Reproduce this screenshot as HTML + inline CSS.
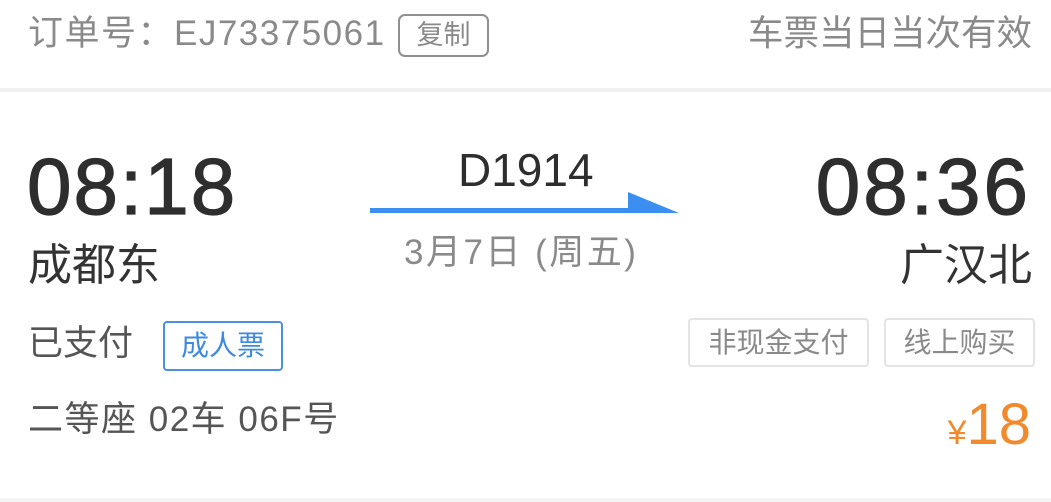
<!DOCTYPE html>
<html><head><meta charset="utf-8"><style>
html,body{margin:0;padding:0;width:1051px;height:502px;overflow:hidden;background:#fff;}
body{position:relative;font-family:"Liberation Sans","Noto Sans CJK SC",sans-serif;}
.a{position:absolute;line-height:1;white-space:nowrap;}
.box{position:absolute;box-sizing:border-box;display:flex;align-items:center;justify-content:center;line-height:1;}
</style></head><body>
<div class="a" style="left:28px;top:16px;font-size:35px;color:#8a8a8a;letter-spacing:1.5px;">订单号：EJ73375061</div>
<div class="box" style="left:398px;top:14px;width:91px;height:43px;border:2.5px solid #8f8f8f;border-radius:7px;font-size:27px;color:#8a8a8a;">复制</div>
<div class="a" style="left:748px;top:16px;font-size:35.5px;color:#8a8a8a;">车票当日当次有效</div>
<div style="position:absolute;left:0;top:88px;width:1051px;height:4px;background:#f1f1f1;"></div>

<div class="a" style="left:27px;top:147px;font-size:80px;color:#2e2e2e;letter-spacing:2px;-webkit-text-stroke:1.2px #2e2e2e;">08:18</div>
<div class="a" style="right:20px;top:147px;font-size:80px;color:#2e2e2e;letter-spacing:3px;-webkit-text-stroke:1.2px #2e2e2e;">08:36</div>
<div class="a" style="left:458px;top:147px;font-size:46px;color:#2e2e2e;">D1914</div>
<svg style="position:absolute;left:0;top:0" width="1051" height="502"><rect x="370" y="208" width="262" height="5" fill="#3b8ff0"/><polygon points="628,192 679,213 628,213" fill="#3b8ff0"/></svg>
<div class="a" style="left:404px;top:235px;font-size:35px;color:#8a8a8a;letter-spacing:2.5px;">3月7日 (周五)</div>
<div class="a" style="left:28px;top:244px;font-size:44px;color:#333;">成都东</div>
<div class="a" style="right:19px;top:244px;font-size:44px;color:#333;">广汉北</div>

<div class="a" style="left:28px;top:326px;font-size:35px;color:#555;">已支付</div>
<div class="box" style="left:163px;top:321px;width:120px;height:50px;border:2px solid #4a90e2;border-radius:4px;font-size:28px;color:#3d8ae0;">成人票</div>
<div class="box" style="left:688px;top:318px;width:181px;height:49px;border:2px solid #e4e4e4;border-radius:4px;font-size:28px;color:#8a8a8a;">非现金支付</div>
<div class="box" style="left:884px;top:318px;width:151px;height:49px;border:2px solid #e4e4e4;border-radius:4px;font-size:28px;color:#8a8a8a;">线上购买</div>

<div class="a" style="left:28px;top:402px;font-size:35px;color:#555;letter-spacing:1.5px;">二等座 02车 06F号</div>
<div class="a" style="right:20px;top:396px;color:#f08a2c;"><span style="font-size:34px;">¥</span><span style="font-size:58px;">18</span></div>
<div style="position:absolute;left:0;top:498px;width:1051px;height:4px;background:#f4f4f4;"></div>
</body></html>
